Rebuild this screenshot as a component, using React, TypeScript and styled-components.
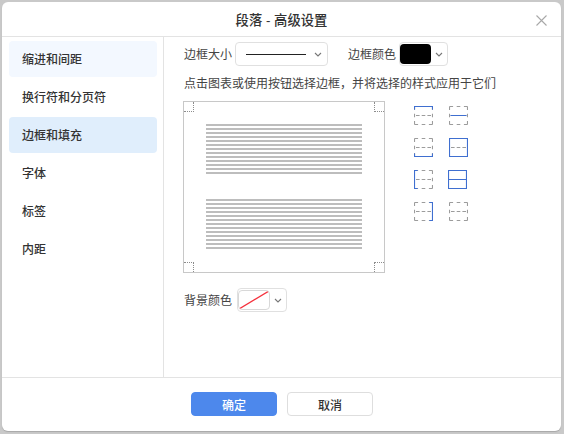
import React from 'react';
import styled, { createGlobalStyle } from 'styled-components';

const GlobalStyle = createGlobalStyle`
  html, body {
    margin: 0;
    padding: 0;
    height: 100%;
    background: #c9c9c9;
    font-family: "Liberation Sans", "Noto Sans CJK SC", sans-serif;
  }
  #root {
    height: 100%;
  }
`;

const menuItems = ['缩进和间距', '换行符和分页符', '边框和填充', '字体', '标签', '内距'];

const Chevron = () => (
  <svg width="8" height="5" viewBox="0 0 8 5" fill="none">
    <path d="M1 1l3 3 3-3" stroke="#777" strokeWidth="1.1" />
  </svg>
);

const CloseIcon = () => (
  <svg width="11" height="11" viewBox="0 0 11 11" fill="none">
    <path d="M.5.5l10 10M10.5.5l-10 10" stroke="#a8a8a8" strokeWidth="1.1" />
  </svg>
);

type Edge = 'top' | 'bottom' | 'left' | 'right' | 'middle' | 'inner';

// the lone blue edges keep a small hook round each corner
const hooked: Record<string, string> = {
  top: 'M.5 3V.5H18.5V3',
  bottom: 'M.5 16V18.5H18.5V16',
  left: 'M3 .5H.5V18.5H3',
  right: 'M16 .5H18.5V18.5H16',
};

const edges: Record<Edge, string> = {
  top: 'M.5 .5H18.5',
  bottom: 'M.5 18.5H18.5',
  left: 'M.5 .5V18.5',
  right: 'M18.5 .5V18.5',
  middle: 'M.5 9.5H18.5',
  inner: 'M2 9.5H17',
};

const BorderIcon = ({ solid }: { solid: Edge[] }) => {
  const outer: Edge[] = ['top', 'bottom', 'left', 'right'];
  const lone = solid.length === 1 && solid[0] !== 'inner';
  return (
    <svg width="19" height="19" viewBox="0 0 19 19" fill="none">
      {outer
        .filter((e) => !solid.includes(e))
        .map((e) => (
          <path key={e} d={edges[e]} stroke="#9c9c9c" strokeWidth="1.15" strokeDasharray="3.6 3.6" />
        ))}
      {!solid.includes('middle') && !solid.includes('inner') && (
        <path d="M2 9.5H17" stroke="#9c9c9c" strokeWidth="1.15" strokeDasharray="3.6 2.1" />
      )}
      {solid.map((e) => (
        <path
          key={e}
          d={lone ? hooked[e] : edges[e]}
          stroke="#3f6fd0"
          strokeWidth="1.15"
          strokeLinecap="square"
        />
      ))}
    </svg>
  );
};

const iconRows: Edge[][][] = [
  [['top'], ['inner']],
  [['bottom'], ['top', 'bottom', 'left', 'right']],
  [['left'], ['top', 'bottom', 'left', 'right', 'middle']],
  [['right'], []],
];

const App = () => (
  <>
    <GlobalStyle />
    <Page>
      <Dialog>
        <TitleBar>
          <Title>段落 - 高级设置</Title>
          <CloseButton>
            <CloseIcon />
          </CloseButton>
        </TitleBar>
        <Body>
          <Sidebar>
            {menuItems.map((item, i) => (
              <MenuItem key={item} $state={i === 2 ? 'active' : i === 0 ? 'hover' : 'none'}>
                {item}
              </MenuItem>
            ))}
          </Sidebar>
          <Content>
            <ControlRow>
              <Label>边框大小</Label>
              <Select $width={93}>
                <LineSample />
                <Chevron />
              </Select>
              <Label $left={20}>边框颜色</Label>
              <Select $width={49} $compact>
                <ColorSwatch />
                <Chevron />
              </Select>
            </ControlRow>
            <Hint>点击图表或使用按钮选择边框，并将选择的样式应用于它们</Hint>
            <EditorRow>
              <Preview>
                <CornerMark $at="tl" />
                <CornerMark $at="tr" />
                <CornerMark $at="bl" />
                <CornerMark $at="br" />
                <TextBlock />
                <TextBlock />
              </Preview>
              <IconGrid>
                {iconRows.flat().map((solid, i) => (
                  <IconButton key={i} $nudge={solid.includes('middle')}>
                    <BorderIcon solid={solid} />
                  </IconButton>
                ))}
              </IconGrid>
            </EditorRow>
            <BackgroundRow>
              <Label $right={5}>背景颜色</Label>
              <Select $width={50} $compact>
                <NoColor>
                  <svg width="30" height="18" viewBox="0 0 30 18">
                    <path d="M0 18L30 0" stroke="#f5303c" strokeWidth="1.3" />
                  </svg>
                </NoColor>
                <Chevron />
              </Select>
            </BackgroundRow>
          </Content>
        </Body>
        <Footer>
          <Button $primary>确定</Button>
          <Button>取消</Button>
        </Footer>
      </Dialog>
    </Page>
  </>
);

const Page = styled.div`
  height: 100%;
  box-sizing: border-box;
  padding: 2px 3px 3px 2px;
`;

const Dialog = styled.div`
  height: 100%;
  display: flex;
  flex-direction: column;
  background: #fff;
  border-radius: 6px;
  box-shadow: 0 1px 1px #a8a8a8;
  overflow: hidden;
`;

const TitleBar = styled.div`
  position: relative;
  flex: 0 0 34px;
  display: flex;
  align-items: center;
  justify-content: center;
  border-bottom: 1px solid #e3e3e3;
`;

const Title = styled.div`
  font-size: 13.33px;
  font-weight: 500;
  color: #333;
`;

const CloseButton = styled.div`
  position: absolute;
  right: 14px;
  top: 13px;
  display: flex;
`;

const Body = styled.div`
  flex: 1;
  display: flex;
  min-height: 0;
`;

const Sidebar = styled.div`
  flex: 0 0 162px;
  box-sizing: border-box;
  padding: 4px 6px 0 7px;
  border-right: 1px solid #e3e3e3;
  display: flex;
  flex-direction: column;
  gap: 2px;
`;

const MenuItem = styled.div<{ $state: 'active' | 'hover' | 'none' }>`
  height: 36px;
  line-height: 38px;
  padding-left: 13px;
  border-radius: 4px;
  font-size: 12px;
  font-weight: 500;
  color: #333;
  background: ${(props) =>
    props.$state === 'active' ? '#e0eefc' : props.$state === 'hover' ? '#f3f8ff' : 'transparent'};
`;

const Content = styled.div`
  flex: 1;
  display: flex;
  flex-direction: column;
  padding: 5px 0 0 20px;
`;

const ControlRow = styled.div`
  display: flex;
  align-items: center;
  height: 24px;
`;

const Label = styled.span<{ $left?: number; $right?: number }>`
  font-size: 12px;
  color: #444;
  margin: 0 ${(props) => props.$right ?? 3}px 2px ${(props) => props.$left ?? 0}px;
`;

const Select = styled.div<{ $width: number; $compact?: boolean }>`
  box-sizing: border-box;
  width: ${(props) => props.$width}px;
  height: 24px;
  display: flex;
  align-items: center;
  justify-content: space-between;
  padding: ${(props) => (props.$compact ? '0 4px 0 0' : '0 5px 0 10px')};
  border: 1px solid #e0e0e0;
  border-radius: 4px;
  background: #fff;
`;

const LineSample = styled.div`
  width: 60px;
  height: 1px;
  background: #222;
`;

const ColorSwatch = styled.div`
  width: 31px;
  height: 20px;
  border-radius: 4px;
  background: #000;
`;

const NoColor = styled.div`
  box-sizing: border-box;
  width: 32px;
  height: 20px;
  display: flex;
  border: 1px solid #d8d8d8;
  border-radius: 4px;
  overflow: hidden;
`;

const Hint = styled.div`
  margin-top: 9px;
  height: 18px;
  line-height: 18px;
  font-size: 12px;
  color: #444;
`;

const EditorRow = styled.div`
  display: flex;
  margin-top: 8px;
  margin-left: -1px;
`;

const Preview = styled.div`
  position: relative;
  box-sizing: border-box;
  width: 202px;
  height: 172px;
  padding: 22px 22px 0;
  border: 1px solid #c8c8c8;
  display: flex;
  flex-direction: column;
  gap: 25px;
`;

const CornerMark = styled.div<{ $at: string }>`
  position: absolute;
  width: 9px;
  height: 9px;
  ${(props) => (props.$at[0] === 't' ? 'top: 0; border-bottom: 1px dotted #8c8c8c;' : 'bottom: 0; border-top: 1px dotted #8c8c8c;')}
  ${(props) => (props.$at[1] === 'l' ? 'left: 0; border-right: 1px dotted #8c8c8c;' : 'right: 0; border-left: 1px dotted #8c8c8c;')}
`;

const TextBlock = styled.div`
  height: 50px;
  background: repeating-linear-gradient(to bottom, #bdbdbd 0 2px, #fff 2px 4px);
`;

const IconGrid = styled.div`
  margin: 5px 0 0 29px;
  display: grid;
  grid-template-columns: 19px 19px;
  grid-auto-rows: 19px;
  column-gap: 16px;
  row-gap: 13px;
  align-self: flex-start;
`;

const IconButton = styled.div<{ $nudge?: boolean }>`
  display: flex;
  margin-left: ${(props) => (props.$nudge ? -1 : 0)}px;
`;

const BackgroundRow = styled(ControlRow)`
  margin-top: 15px;
`;

const Footer = styled.div`
  flex: 0 0 54px;
  display: flex;
  gap: 10px;
  padding: 14px 0 0 189px;
  box-sizing: border-box;
  border-top: 1px solid #e3e3e3;
`;

const Button = styled.button<{ $primary?: boolean }>`
  box-sizing: border-box;
  width: 86px;
  height: 24px;
  padding: 0;
  font-family: inherit;
  font-size: 12px;
  font-weight: 500;
  border-radius: 4px;
  border: 1px solid ${(props) => (props.$primary ? '#4d88ec' : '#dedede')};
  background: ${(props) => (props.$primary ? '#4d88ec' : '#fff')};
  color: ${(props) => (props.$primary ? '#fff' : '#333')};
`;

export default App;
